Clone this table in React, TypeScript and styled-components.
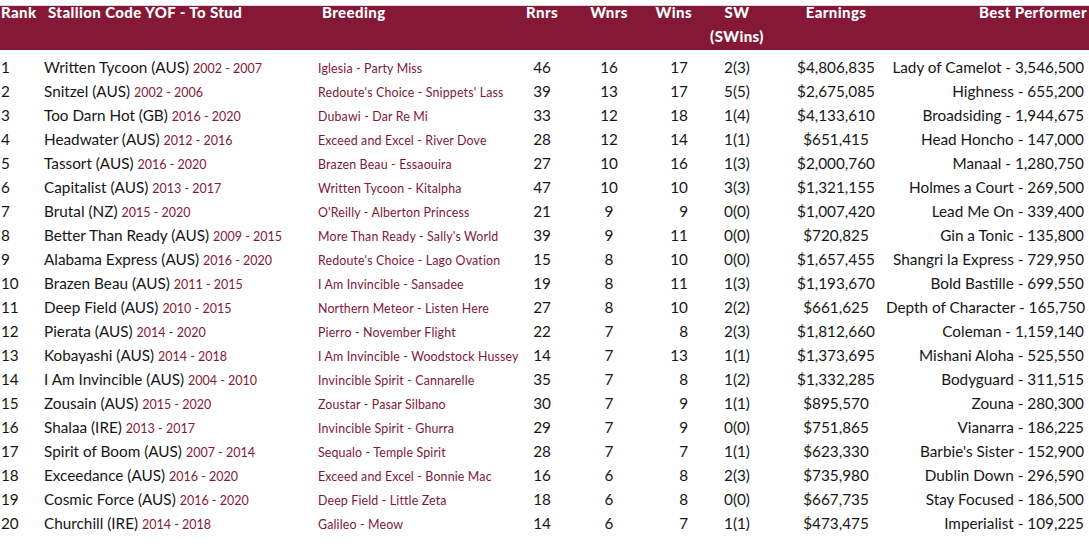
import styled, {createGlobalStyle} from 'styled-components'

const GlobalStyle = createGlobalStyle`
  html, body {
    margin: 0;
    padding: 0;
    background: #ffffff;
  }
  body {
    font-family: Lato, 'Open Sans', sans-serif;
    color: #161616;
  }
`

const maroon = '#851836'

const Table = styled.div`
  width: 1089px;
`

const columns = '44px 274px 198px 52px 82px 38px 98px 100px 198px'

const HeaderRow = styled.div`
  display: grid;
  grid-template-columns: ${columns};
  height: 50px;
  background: linear-gradient(#ffffff 0 5px, #e4d6da 5px 6px, ${maroon} 6px);
  color: #ffffff;
  font-weight: 900;
  font-size: 15px;
  letter-spacing: 0.4px;
  line-height: 24px;
  margin-bottom: 5px;
`

type AlignProps = {$align?: 'left' | 'center' | 'right'; $pad?: number}

const HeadCell = styled.div<AlignProps>`
  text-align: ${p => p.$align ?? 'left'};
  padding-left: ${p => (p.$align === 'left' || !p.$align ? p.$pad ?? 0 : 0)}px;
  margin-right: ${p => (p.$align === 'right' ? -(p.$pad ?? 0) : 0)}px;
  white-space: nowrap;
`

const Row = styled.div`
  display: grid;
  grid-template-columns: ${columns};
  align-items: baseline;
  height: 24px;
  line-height: 24px;
  font-size: 15.3px;
  white-space: nowrap;
`

const Cell = styled.div<AlignProps>`
  text-align: ${p => p.$align ?? 'left'};
  padding-left: ${p => (p.$align === 'left' || !p.$align ? p.$pad ?? 0 : 0)}px;
`

const Years = styled.span`
  color: ${maroon};
  font-size: 12.5px;
`

const Breeding = styled(Cell)`
  color: #7f1736;
  font-size: 12.4px;
  font-weight: 400;
  letter-spacing: 0.15px;
`

type Stallion = {
  name: string
  years: string
  breeding: string
  rnrs: number
  wnrs: number
  wins: number
  sw: string
  earnings: string
  best: string
}

const data: Stallion[] = [
  {name: 'Written Tycoon (AUS)', years: '2002 - 2007', breeding: 'Iglesia - Party Miss', rnrs: 46, wnrs: 16, wins: 17, sw: '2(3)', earnings: '$4,806,835', best: 'Lady of Camelot - 3,546,500'},
  {name: 'Snitzel (AUS)', years: '2002 - 2006', breeding: "Redoute's Choice - Snippets' Lass", rnrs: 39, wnrs: 13, wins: 17, sw: '5(5)', earnings: '$2,675,085', best: 'Highness - 655,200'},
  {name: 'Too Darn Hot (GB)', years: '2016 - 2020', breeding: 'Dubawi - Dar Re Mi', rnrs: 33, wnrs: 12, wins: 18, sw: '1(4)', earnings: '$4,133,610', best: 'Broadsiding - 1,944,675'},
  {name: 'Headwater (AUS)', years: '2012 - 2016', breeding: 'Exceed and Excel - River Dove', rnrs: 28, wnrs: 12, wins: 14, sw: '1(1)', earnings: '$651,415', best: 'Head Honcho - 147,000'},
  {name: 'Tassort (AUS)', years: '2016 - 2020', breeding: 'Brazen Beau - Essaouira', rnrs: 27, wnrs: 10, wins: 16, sw: '1(3)', earnings: '$2,000,760', best: 'Manaal - 1,280,750'},
  {name: 'Capitalist (AUS)', years: '2013 - 2017', breeding: 'Written Tycoon - Kitalpha', rnrs: 47, wnrs: 10, wins: 10, sw: '3(3)', earnings: '$1,321,155', best: 'Holmes a Court - 269,500'},
  {name: 'Brutal (NZ)', years: '2015 - 2020', breeding: "O'Reilly - Alberton Princess", rnrs: 21, wnrs: 9, wins: 9, sw: '0(0)', earnings: '$1,007,420', best: 'Lead Me On - 339,400'},
  {name: 'Better Than Ready (AUS)', years: '2009 - 2015', breeding: "More Than Ready - Sally's World", rnrs: 39, wnrs: 9, wins: 11, sw: '0(0)', earnings: '$720,825', best: 'Gin a Tonic - 135,800'},
  {name: 'Alabama Express (AUS)', years: '2016 - 2020', breeding: "Redoute's Choice - Lago Ovation", rnrs: 15, wnrs: 8, wins: 10, sw: '0(0)', earnings: '$1,657,455', best: 'Shangri la Express - 729,950'},
  {name: 'Brazen Beau (AUS)', years: '2011 - 2015', breeding: 'I Am Invincible - Sansadee', rnrs: 19, wnrs: 8, wins: 11, sw: '1(3)', earnings: '$1,193,670', best: 'Bold Bastille - 699,550'},
  {name: 'Deep Field (AUS)', years: '2010 - 2015', breeding: 'Northern Meteor - Listen Here', rnrs: 27, wnrs: 8, wins: 10, sw: '2(2)', earnings: '$661,625', best: 'Depth of Character - 165,750'},
  {name: 'Pierata (AUS)', years: '2014 - 2020', breeding: 'Pierro - November Flight', rnrs: 22, wnrs: 7, wins: 8, sw: '2(3)', earnings: '$1,812,660', best: 'Coleman - 1,159,140'},
  {name: 'Kobayashi (AUS)', years: '2014 - 2018', breeding: 'I Am Invincible - Woodstock Hussey', rnrs: 14, wnrs: 7, wins: 13, sw: '1(1)', earnings: '$1,373,695', best: 'Mishani Aloha - 525,550'},
  {name: 'I Am Invincible (AUS)', years: '2004 - 2010', breeding: 'Invincible Spirit - Cannarelle', rnrs: 35, wnrs: 7, wins: 8, sw: '1(2)', earnings: '$1,332,285', best: 'Bodyguard - 311,515'},
  {name: 'Zousain (AUS)', years: '2015 - 2020', breeding: 'Zoustar - Pasar Silbano', rnrs: 30, wnrs: 7, wins: 9, sw: '1(1)', earnings: '$895,570', best: 'Zouna - 280,300'},
  {name: 'Shalaa (IRE)', years: '2013 - 2017', breeding: 'Invincible Spirit - Ghurra', rnrs: 29, wnrs: 7, wins: 9, sw: '0(0)', earnings: '$751,865', best: 'Vianarra - 186,225'},
  {name: 'Spirit of Boom (AUS)', years: '2007 - 2014', breeding: 'Sequalo - Temple Spirit', rnrs: 28, wnrs: 7, wins: 7, sw: '1(1)', earnings: '$623,330', best: "Barbie's Sister - 152,900"},
  {name: 'Exceedance (AUS)', years: '2016 - 2020', breeding: 'Exceed and Excel - Bonnie Mac', rnrs: 16, wnrs: 6, wins: 8, sw: '2(3)', earnings: '$735,980', best: 'Dublin Down - 296,590'},
  {name: 'Cosmic Force (AUS)', years: '2016 - 2020', breeding: 'Deep Field - Little Zeta', rnrs: 18, wnrs: 6, wins: 8, sw: '0(0)', earnings: '$667,735', best: 'Stay Focused - 186,500'},
  {name: 'Churchill (IRE)', years: '2014 - 2018', breeding: 'Galileo - Meow', rnrs: 14, wnrs: 6, wins: 7, sw: '1(1)', earnings: '$473,475', best: 'Imperialist - 109,225'},
]

const App = () => (
  <Table>
    <GlobalStyle />
    <HeaderRow>
      <HeadCell $pad={1}>Rank</HeadCell>
      <HeadCell $pad={4}>Stallion Code YOF - To Stud</HeadCell>
      <HeadCell $pad={4}>Breeding</HeadCell>
      <HeadCell $align='center'>Rnrs</HeadCell>
      <HeadCell $align='center'>Wnrs</HeadCell>
      <HeadCell $align='right' $pad={4}>Wins</HeadCell>
      <HeadCell $align='center'>
        SW
        <br />
        (SWins)
      </HeadCell>
      <HeadCell $align='center'>Earnings</HeadCell>
      <HeadCell $align='right' $pad={3}>Best Performer</HeadCell>
    </HeaderRow>
    {data.map((s, i) => (
      <Row key={s.name}>
        <Cell $pad={1}>{i + 1}</Cell>
        <Cell>
          {s.name} <Years>{s.years}</Years>
        </Cell>
        <Breeding>{s.breeding}</Breeding>
        <Cell $align='center'>{s.rnrs}</Cell>
        <Cell $align='center'>{s.wnrs}</Cell>
        <Cell $align='right'>{s.wins}</Cell>
        <Cell $align='center'>{s.sw}</Cell>
        <Cell $align='center'>{s.earnings}</Cell>
        <Cell $align='right'>{s.best}</Cell>
      </Row>
    ))}
  </Table>
)

App.displayName = 'App'
export default App
